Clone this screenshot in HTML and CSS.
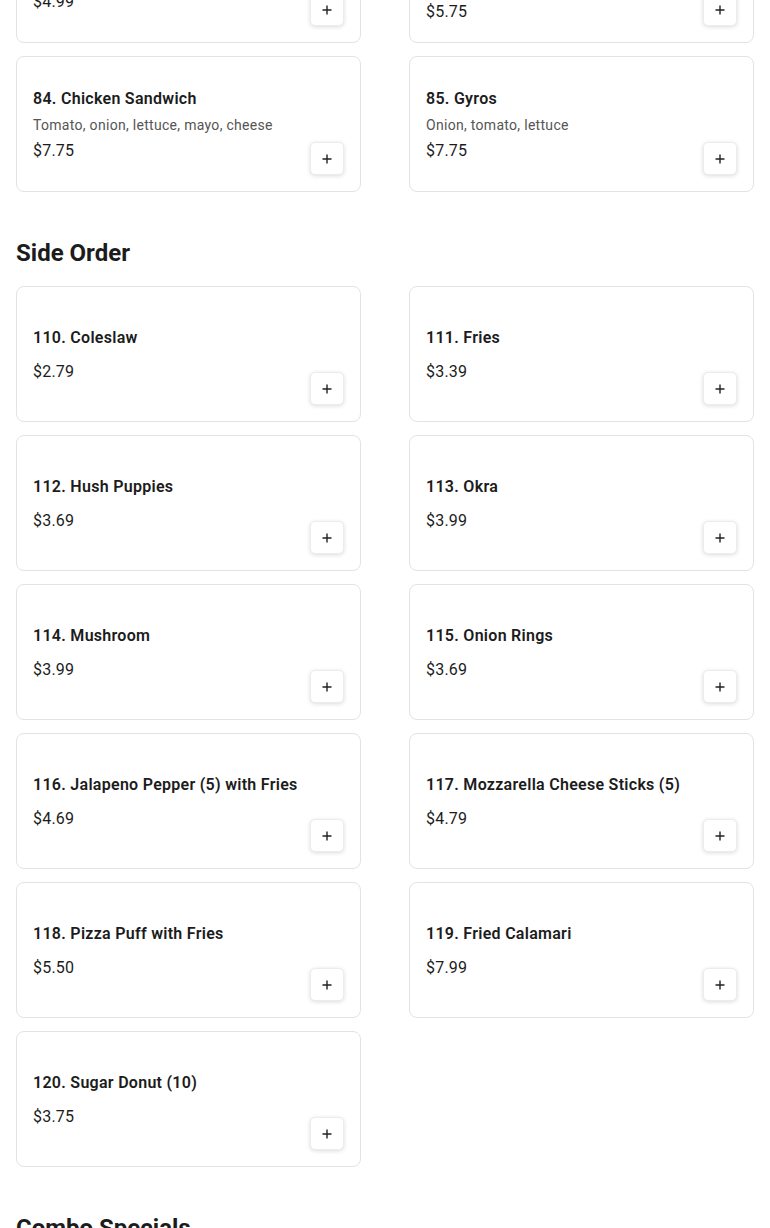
FILE: index.html
```html
<!DOCTYPE html>
<html lang="en">
<head>
<meta charset="utf-8">
<title>Menu</title>
<link rel="stylesheet" href="styles.css">
</head>
<body>
<main class="menu">
  <section class="category">
    <div class="grid">
      <div class="card">
        <div class="info">
          <h3 class="name">82. Fish Sandwich</h3>
          <p class="desc">Tartar sauce, lettuce, cheese</p>
          <p class="price">$4.99</p>
        </div>
        <button class="add" aria-label="Add"><svg viewBox="0 0 12 12" width="12" height="12"><path d="M6 1.5v9M1.5 6h9" stroke="currentColor" stroke-width="1.4" fill="none"/></svg></button>
      </div>
      <div class="card">
        <div class="info">
          <h3 class="name">83. Italian Beef</h3>
          <p class="desc">Sweet peppers, hot giardiniera, served on French bread</p>
          <p class="price">$5.75</p>
        </div>
        <button class="add" aria-label="Add"><svg viewBox="0 0 12 12" width="12" height="12"><path d="M6 1.5v9M1.5 6h9" stroke="currentColor" stroke-width="1.4" fill="none"/></svg></button>
      </div>
      <div class="card">
        <div class="info">
          <h3 class="name">84. Chicken Sandwich</h3>
          <p class="desc">Tomato, onion, lettuce, mayo, cheese</p>
          <p class="price">$7.75</p>
        </div>
        <button class="add" aria-label="Add"><svg viewBox="0 0 12 12" width="12" height="12"><path d="M6 1.5v9M1.5 6h9" stroke="currentColor" stroke-width="1.4" fill="none"/></svg></button>
      </div>
      <div class="card">
        <div class="info">
          <h3 class="name">85. Gyros</h3>
          <p class="desc">Onion, tomato, lettuce</p>
          <p class="price">$7.75</p>
        </div>
        <button class="add" aria-label="Add"><svg viewBox="0 0 12 12" width="12" height="12"><path d="M6 1.5v9M1.5 6h9" stroke="currentColor" stroke-width="1.4" fill="none"/></svg></button>
      </div>
    </div>
  </section>

  <section class="category">
    <h2 class="title">Side Order</h2>
    <div class="grid">
      <div class="card">
        <div class="info"><h3 class="name">110. Coleslaw</h3><p class="price">$2.79</p></div>
        <button class="add" aria-label="Add"><svg viewBox="0 0 12 12" width="12" height="12"><path d="M6 1.5v9M1.5 6h9" stroke="currentColor" stroke-width="1.4" fill="none"/></svg></button>
      </div>
      <div class="card">
        <div class="info"><h3 class="name">111. Fries</h3><p class="price">$3.39</p></div>
        <button class="add" aria-label="Add"><svg viewBox="0 0 12 12" width="12" height="12"><path d="M6 1.5v9M1.5 6h9" stroke="currentColor" stroke-width="1.4" fill="none"/></svg></button>
      </div>
      <div class="card">
        <div class="info"><h3 class="name">112. Hush Puppies</h3><p class="price">$3.69</p></div>
        <button class="add" aria-label="Add"><svg viewBox="0 0 12 12" width="12" height="12"><path d="M6 1.5v9M1.5 6h9" stroke="currentColor" stroke-width="1.4" fill="none"/></svg></button>
      </div>
      <div class="card">
        <div class="info"><h3 class="name">113. Okra</h3><p class="price">$3.99</p></div>
        <button class="add" aria-label="Add"><svg viewBox="0 0 12 12" width="12" height="12"><path d="M6 1.5v9M1.5 6h9" stroke="currentColor" stroke-width="1.4" fill="none"/></svg></button>
      </div>
      <div class="card">
        <div class="info"><h3 class="name">114. Mushroom</h3><p class="price">$3.99</p></div>
        <button class="add" aria-label="Add"><svg viewBox="0 0 12 12" width="12" height="12"><path d="M6 1.5v9M1.5 6h9" stroke="currentColor" stroke-width="1.4" fill="none"/></svg></button>
      </div>
      <div class="card">
        <div class="info"><h3 class="name">115. Onion Rings</h3><p class="price">$3.69</p></div>
        <button class="add" aria-label="Add"><svg viewBox="0 0 12 12" width="12" height="12"><path d="M6 1.5v9M1.5 6h9" stroke="currentColor" stroke-width="1.4" fill="none"/></svg></button>
      </div>
      <div class="card">
        <div class="info"><h3 class="name">116. Jalapeno Pepper (5) with Fries</h3><p class="price">$4.69</p></div>
        <button class="add" aria-label="Add"><svg viewBox="0 0 12 12" width="12" height="12"><path d="M6 1.5v9M1.5 6h9" stroke="currentColor" stroke-width="1.4" fill="none"/></svg></button>
      </div>
      <div class="card">
        <div class="info"><h3 class="name">117. Mozzarella Cheese Sticks (5)</h3><p class="price">$4.79</p></div>
        <button class="add" aria-label="Add"><svg viewBox="0 0 12 12" width="12" height="12"><path d="M6 1.5v9M1.5 6h9" stroke="currentColor" stroke-width="1.4" fill="none"/></svg></button>
      </div>
      <div class="card">
        <div class="info"><h3 class="name">118. Pizza Puff with Fries</h3><p class="price">$5.50</p></div>
        <button class="add" aria-label="Add"><svg viewBox="0 0 12 12" width="12" height="12"><path d="M6 1.5v9M1.5 6h9" stroke="currentColor" stroke-width="1.4" fill="none"/></svg></button>
      </div>
      <div class="card">
        <div class="info"><h3 class="name">119. Fried Calamari</h3><p class="price">$7.99</p></div>
        <button class="add" aria-label="Add"><svg viewBox="0 0 12 12" width="12" height="12"><path d="M6 1.5v9M1.5 6h9" stroke="currentColor" stroke-width="1.4" fill="none"/></svg></button>
      </div>
      <div class="card">
        <div class="info"><h3 class="name">120. Sugar Donut (10)</h3><p class="price">$3.75</p></div>
        <button class="add" aria-label="Add"><svg viewBox="0 0 12 12" width="12" height="12"><path d="M6 1.5v9M1.5 6h9" stroke="currentColor" stroke-width="1.4" fill="none"/></svg></button>
      </div>
    </div>
  </section>

  <section class="category">
    <h2 class="title">Combo Specials</h2>
    <div class="grid">
      <div class="card">
        <div class="info"><h3 class="name">121. Combo #1</h3><p class="price">$9.99</p></div>
        <button class="add" aria-label="Add"><svg viewBox="0 0 12 12" width="12" height="12"><path d="M6 1.5v9M1.5 6h9" stroke="currentColor" stroke-width="1.4" fill="none"/></svg></button>
      </div>
    </div>
  </section>
</main>
</body>
</html>
```

FILE: styles.css
```css
* { box-sizing: border-box; }

html, body {
  margin: 0;
  background: #ffffff;
}

body {
  font-family: Roboto, "Liberation Sans", Arial, sans-serif;
  color: #1c1c1c;
}

.menu {
  margin-top: -93px;
  padding: 0 16px;
}

.category + .category {
  margin-top: 45px;
}

.title {
  margin: 0 0 17px;
  font-size: 24px;
  line-height: 32px;
  font-weight: 700;
  color: #1c1c1c;
}

.grid {
  display: grid;
  grid-template-columns: 1fr 1fr;
  column-gap: 48px;
  row-gap: 13px;
}

.card {
  display: flex;
  gap: 12px;
  min-height: 136px;
  padding: 16px;
  border: 1px solid #e3e3e3;
  border-radius: 8px;
  background: #fff;
}

.info {
  flex: 1;
  align-self: center;
  min-width: 0;
  padding-top: 2px;
}

.name {
  margin: 0;
  font-size: 16px;
  line-height: 24px;
  font-weight: 600;
  letter-spacing: 0.28px;
  color: #1c1c1c;
}

.desc {
  margin: 4px 0 0;
  font-size: 14px;
  line-height: 20px;
  letter-spacing: 0.3px;
  color: #555555;
}

.price {
  margin: 4px 0 0;
  font-size: 16px;
  line-height: 24px;
  letter-spacing: 0.2px;
  color: #1c1c1c;
}

.name + .price {
  margin-top: 10px;
}

.add {
  align-self: flex-end;
  flex: none;
  display: flex;
  align-items: center;
  justify-content: center;
  width: 34px;
  height: 33px;
  padding: 0;
  border: 1px solid #ececec;
  border-radius: 5px;
  background: #fff;
  color: #222;
  box-shadow: 0 1px 4px rgba(0, 0, 0, 0.14);
  cursor: pointer;
}

.add svg {
  display: block;
}
```
